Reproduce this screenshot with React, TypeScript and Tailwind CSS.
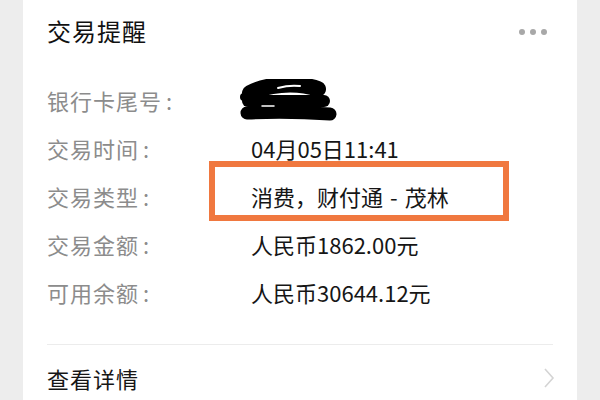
const font = { fontFamily: '"Noto Sans CJK SC", "Noto Sans", sans-serif' };

const rows = [
  { label: '银行卡尾号', value: null },
  { label: '交易时间', value: '04月05日11:41' },
  { label: '交易类型', value: 'type', marked: true },
  { label: '交易金额', value: '人民币1862.00元' },
  { label: '可用余额', value: '人民币30644.12元' },
];

function Scribble() {
  // hand-drawn black marker over the card number
  return (
    <svg width="97" height="42" viewBox="0 0 97 42" className="ml-[-11px]">
      <g stroke="#000" strokeLinecap="round" fill="none">
        <path d="M10 14 C 25 6, 55 2, 78 10" strokeWidth="16" />
        <path d="M8 22 L 84 22" strokeWidth="12" />
        <path d="M7 34 C 30 33, 60 33, 90 35" strokeWidth="13" />
        <path d="M4 18 L 12 18" strokeWidth="8" />
      </g>
      <path d="M38 9 C 45 7, 52 6, 60 7" stroke="#fff" strokeWidth="2" fill="none" strokeLinecap="round" />
      <path d="M22 27 L 34 27" stroke="#fff" strokeWidth="1.5" fill="none" strokeLinecap="round" />
    </svg>
  );
}

export default function App() {
  return (
    <div className="w-[600px] h-[400px] overflow-hidden bg-[#ededed] px-[23px]" style={font}>
      <div className="bg-white h-full px-6">
        <div className="h-[63px] flex items-center justify-between">
          <span className="text-[24px] leading-none tracking-[1px] text-[#111] mt-[-2px]">交易提醒</span>
          <div className="flex gap-[5px] mr-[6px]">
            <span className="w-[6px] h-[6px] rounded-full bg-[#a8a8a8]" />
            <span className="w-[6px] h-[6px] rounded-full bg-[#a8a8a8]" />
            <span className="w-[6px] h-[6px] rounded-full bg-[#a8a8a8]" />
          </div>
        </div>

        <div className="mt-[13px]">
          {rows.map((r) => (
            <div key={r.label} className="relative h-12 flex items-center">
              <span className="w-[204px] text-[22px] leading-none tracking-[1px] text-[#8c8c8c]">
                {r.label}
                <span className="ml-[4px]">:</span>
              </span>
              {r.value === 'type' ? (
                <span className="text-[22px] leading-none text-[#161616]">
                  消费，财付通<span className="mx-[7px]">-</span>茂林
                </span>
              ) : r.value ? (
                <span className="text-[22px] leading-none text-[#161616]">{r.value}</span>
              ) : (
                <Scribble />
              )}
              {r.marked && (
                <div className="absolute left-[162px] top-[-11px] w-[300px] h-[60px] border-[6px] border-[#f0783f]" />
              )}
            </div>
          ))}
        </div>

        <div className="mt-[28px] border-t border-[#ececec] h-[66px] flex items-center justify-between">
          <span className="text-[22px] leading-none tracking-[1px] text-[#161616]">查看详情</span>
          <svg width="12" height="20" viewBox="0 0 12 20" className="mr-[-2px]">
            <path d="M2 1 L 10 10 L 2 19" stroke="#d4d4d4" strokeWidth="1.6" fill="none" />
          </svg>
        </div>
      </div>
    </div>
  );
}
